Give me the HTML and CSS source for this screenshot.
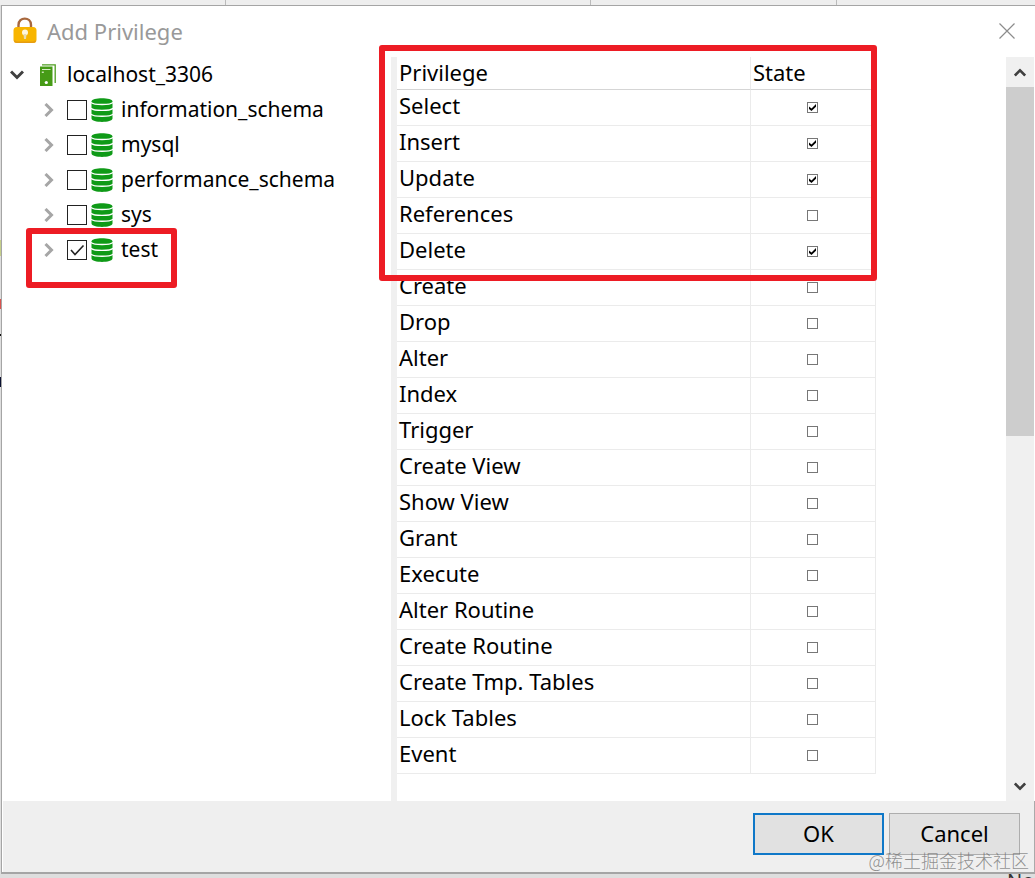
FILE: index.html
```html
<!DOCTYPE html>
<html lang="en">
<head>
    <meta charset="UTF-8">
    <meta name="viewport" content="width=device-width, initial-scale=1.0">
    <title>Add Privilege</title>
    <link rel="stylesheet" href="styles.css">
</head>
<body>
    <svg class="defs" width="0" height="0" aria-hidden="true">
        <symbol id="icon-db" viewBox="0 0 22 24">
            <path fill="#0f9a17" d="M0.500 3.500C0.500 -0.700 21.500 -0.700 21.500 3.500V20.500C21.500 25 0.500 25 0.500 20.500Z"/>
            <path fill="none" stroke="#fff" stroke-width="1.300" d="M0 4.300C2 7.200 20 7.200 22 4.300M0 10.200C2 13.200 20 13.200 22 10.200M0 16C2 19 20 19 22 16"/>
        </symbol>
        <symbol id="icon-right" viewBox="0 0 10 14">
            <path fill="none" stroke="#a6a6a6" stroke-width="3" d="M1.500 1L7.500 7L1.500 13"/>
        </symbol>
        <symbol id="icon-down" viewBox="0 0 14 10">
            <path fill="none" stroke="#404040" stroke-width="3" d="M1 1.500L7 7.500L13 1.500"/>
        </symbol>
    </svg>

    <div class="dialog">
        <header class="titlebar">
            <svg class="lock" viewBox="0 0 24 27" aria-hidden="true">
                <path fill="none" stroke="#a8683e" stroke-width="2.400" d="M5.500 12V8C5.500 -0.500 18 -0.500 18 8V12"/>
                <rect x="0.500" y="10" width="23" height="16" rx="3.500" fill="#f8b500"/>
                <path fill="none" stroke="#e59c12" stroke-width="1.500" d="M1.500 23.500Q2 25.300 4 25.300H20Q22 25.300 22.500 23.500"/>
                <circle cx="12" cy="15.500" r="3" fill="#fff6dc"/>
                <path fill="#e8dcb0" d="M10.500 17h3l-0.500 5h-2z"/>
            </svg>
            <h1>Add Privilege</h1>
            <button class="close" type="button" aria-label="Close">
                <svg width="16" height="16" viewBox="0 0 16 16"><path stroke="#8c8c8c" stroke-width="1.200" d="M0.500 0.500L15.500 15.500M15.500 0.500L0.500 15.500"/></svg>
            </button>
        </header>

        <main class="content">
            <nav class="tree" aria-label="Databases">
                <div class="root">
                    <svg class="arrow-down" width="14" height="10"><use href="#icon-down"/></svg>
                    <svg class="server" width="16" height="22" viewBox="0 0 16 22">
                        <path fill="none" stroke="#4d9d1f" stroke-width="1.300" d="M2 0.800H15.200V19"/>
                        <rect x="0" y="2.500" width="12.500" height="19.500" fill="#469b16"/>
                        <path stroke="#d8ebcb" stroke-width="1" d="M2 5.500H10.500"/>
                        <rect x="1.800" y="7.600" width="2" height="1.300" fill="#d8ebcb"/>
                        <circle cx="6.300" cy="18.500" r="1.600" fill="#fff"/>
                    </svg>
                    <span>localhost_3306</span>
                </div>
                <ul>
                    <li>
                        <svg class="arrow" width="10" height="14"><use href="#icon-right"/></svg>
                        <input type="checkbox" id="db-information">
                        <svg class="db" width="22" height="24"><use href="#icon-db"/></svg>
                        <label for="db-information">information_schema</label>
                    </li>
                    <li>
                        <svg class="arrow" width="10" height="14"><use href="#icon-right"/></svg>
                        <input type="checkbox" id="db-mysql">
                        <svg class="db" width="22" height="24"><use href="#icon-db"/></svg>
                        <label for="db-mysql">mysql</label>
                    </li>
                    <li>
                        <svg class="arrow" width="10" height="14"><use href="#icon-right"/></svg>
                        <input type="checkbox" id="db-performance">
                        <svg class="db" width="22" height="24"><use href="#icon-db"/></svg>
                        <label for="db-performance">performance_schema</label>
                    </li>
                    <li>
                        <svg class="arrow" width="10" height="14"><use href="#icon-right"/></svg>
                        <input type="checkbox" id="db-sys">
                        <svg class="db" width="22" height="24"><use href="#icon-db"/></svg>
                        <label for="db-sys">sys</label>
                    </li>
                    <li>
                        <svg class="arrow" width="10" height="14"><use href="#icon-right"/></svg>
                        <input type="checkbox" id="db-test" checked>
                        <svg class="db" width="22" height="24"><use href="#icon-db"/></svg>
                        <label for="db-test">test</label>
                        <div class="highlight highlight-db"></div>
                    </li>
                </ul>
            </nav>

            <section class="privileges">
                <div class="grid-wrap">
                    <table>
                        <thead>
                            <tr><th>Privilege</th><th>State</th></tr>
                        </thead>
                        <tbody>
                            <tr><td><label for="p1">Select</label></td><td><input type="checkbox" id="p1" checked></td></tr>
                            <tr><td><label for="p2">Insert</label></td><td><input type="checkbox" id="p2" checked></td></tr>
                            <tr><td><label for="p3">Update</label></td><td><input type="checkbox" id="p3" checked></td></tr>
                            <tr><td><label for="p4">References</label></td><td><input type="checkbox" id="p4"></td></tr>
                            <tr><td><label for="p5">Delete</label></td><td><input type="checkbox" id="p5" checked></td></tr>
                            <tr><td><label for="p6">Create</label></td><td><input type="checkbox" id="p6"></td></tr>
                            <tr><td><label for="p7">Drop</label></td><td><input type="checkbox" id="p7"></td></tr>
                            <tr><td><label for="p8">Alter</label></td><td><input type="checkbox" id="p8"></td></tr>
                            <tr><td><label for="p9">Index</label></td><td><input type="checkbox" id="p9"></td></tr>
                            <tr><td><label for="p10">Trigger</label></td><td><input type="checkbox" id="p10"></td></tr>
                            <tr><td><label for="p11">Create View</label></td><td><input type="checkbox" id="p11"></td></tr>
                            <tr><td><label for="p12">Show View</label></td><td><input type="checkbox" id="p12"></td></tr>
                            <tr><td><label for="p13">Grant</label></td><td><input type="checkbox" id="p13"></td></tr>
                            <tr><td><label for="p14">Execute</label></td><td><input type="checkbox" id="p14"></td></tr>
                            <tr><td><label for="p15">Alter Routine</label></td><td><input type="checkbox" id="p15"></td></tr>
                            <tr><td><label for="p16">Create Routine</label></td><td><input type="checkbox" id="p16"></td></tr>
                            <tr><td><label for="p17">Create Tmp. Tables</label></td><td><input type="checkbox" id="p17"></td></tr>
                            <tr><td><label for="p18">Lock Tables</label></td><td><input type="checkbox" id="p18"></td></tr>
                            <tr><td><label for="p19">Event</label></td><td><input type="checkbox" id="p19"></td></tr>
                        </tbody>
                    </table>
                    <div class="highlight highlight-grid"></div>
                </div>
            </section>

            <div class="scrollbar">
                <button type="button" aria-label="Scroll up"><svg class="up" width="12" height="9" viewBox="0 0 14 10"><use href="#icon-down"/></svg></button>
                <div class="track"><div class="thumb"></div></div>
                <button type="button" aria-label="Scroll down"><svg width="12" height="9" viewBox="0 0 14 10"><use href="#icon-down"/></svg></button>
            </div>
        </main>

        <footer class="actions">
            <button class="btn btn-default" type="button">OK</button>
            <button class="btn" type="button">Cancel</button>
        </footer>
    </div>

    <div class="behind">No</div>
    <div class="watermark">@稀土掘金技术社区</div>
</body>
</html>
```
FILE: styles.css
```css
* {
    box-sizing: border-box;
}
body {
    margin: 0;
    padding: 5px 0 4px 1px;
    min-height: 100vh;
    display: flex;
    flex-direction: column;
    position: relative;
    overflow: hidden;
    font-family: "Noto Sans", "Noto Sans CJK SC", sans-serif;
    font-size: 22px;
    line-height: 30px;
    color: #000;
    /* slivers of the window behind the dialog */
    background:
        linear-gradient(#bbb, #bbb) 225px 0 / 1px 5px no-repeat,
        linear-gradient(#bbb, #bbb) 590px 0 / 1px 5px no-repeat,
        linear-gradient(#bbb, #bbb) 836px 0 / 1px 5px no-repeat,
        linear-gradient(#c5cf8a, #c5cf8a) 0 240px / 2px 16px no-repeat,
        linear-gradient(#d9534f, #d9534f) 0 299px / 2px 10px no-repeat,
        linear-gradient(#111, #111) 0 334px / 2px 2px no-repeat,
        linear-gradient(#0a1030, #0a1030) 0 377px / 2px 10px no-repeat,
        linear-gradient(#eee, #eee) 0 0 / 100% 5px no-repeat,
        #dedede;
}
.defs {
    position: absolute;
}
.dialog {
    flex: 1;
    display: flex;
    flex-direction: column;
    background: #fff;
    border: 1px solid #a5a5a5;
    border-width: 1px 0 2px 1px;
}

/* title bar */
.titlebar {
    height: 51px;
    flex: none;
    display: flex;
    align-items: center;
    padding: 0 20px 2px 11px;
}
.lock {
    width: 24px;
    height: 27px;
    margin-right: 10px;
}
h1 {
    margin: 0;
    flex: 1;
    font-size: 22px;
    font-weight: normal;
    color: #999;
}
.close {
    display: flex;
    padding: 0;
    border: none;
    background: none;
}

.content {
    flex: 1;
    display: flex;
}

/* database tree */
.tree {
    flex: 0 0 389px;
    font-size: 21px;
}
.tree ul {
    list-style: none;
    margin: 0;
    padding: 0;
}
.root,
.tree li {
    display: flex;
    align-items: center;
    height: 35px;
}
.root {
    padding-left: 8px;
}
.tree li {
    position: relative;
    padding-left: 42px;
}
.tree label,
.root span {
    padding-bottom: 2px;
}
.server {
    margin: 0 11px 0 16px;
}
.arrow {
    margin-right: 13px;
}
.db {
    margin: 0 8px 0 4px;
}
input[type="checkbox"] {
    appearance: none;
    margin: 0;
    background: #fff center / contain no-repeat;
}
.tree input {
    width: 20px;
    height: 20px;
    border: 1px solid #222;
}
.tree input:checked {
    background-image: url("data:image/svg+xml,%3Csvg xmlns='http://www.w3.org/2000/svg' viewBox='0 0 18 18'%3E%3Cpath fill='none' stroke='%23222' stroke-width='1.600' d='M3 9L7 13.500L15.500 4.500'/%3E%3C/svg%3E");
}

/* privilege grid */
.privileges {
    flex: 1;
    border-left: 6px solid #f0f0f0;
    padding-bottom: 27px;
}
.grid-wrap {
    position: relative;
    width: 479px;
}
table {
    width: 100%;
    table-layout: fixed;
    border-collapse: separate;
    border-spacing: 0;
}
th,
td {
    height: 36px;
    padding: 0 2px;
    border-right: 1px solid #ebebeb;
    border-bottom: 1px solid #ebebeb;
    text-align: left;
    font-weight: normal;
}
th {
    height: 33px;
    padding-bottom: 2px;
    border-bottom-color: #d5d5d5;
}
th:first-child {
    width: 354px;
}
td:first-child {
    padding-bottom: 5px;
}
td:last-child {
    padding-right: 4px;
    text-align: center;
    line-height: 0;
}
td label {
    display: block;
}
td input {
    width: 11px;
    height: 11px;
    border: 1px solid #777;
}
td input:checked {
    background-image: url("data:image/svg+xml,%3Csvg xmlns='http://www.w3.org/2000/svg' viewBox='0 0 9 9'%3E%3Cpath fill='%23000' d='M1 3.500L3.500 5.500L8 1V3.800L3.500 8L1 6Z'/%3E%3C/svg%3E");
}

/* red marker boxes */
.highlight {
    position: absolute;
    border: 6px solid #ed1c24;
    border-radius: 3px;
    pointer-events: none;
}
.highlight-db {
    left: 24px;
    top: -4px;
    width: 151px;
    height: 60px;
}
.highlight-grid {
    left: -18px;
    top: -12px;
    width: 498px;
    height: 236px;
}

.scrollbar {
    flex: 0 0 29px;
    display: flex;
    flex-direction: column;
    background: #f0f0f0;
    border-right: 1px solid #fff;
}
.scrollbar button {
    height: 30px;
    padding: 0;
    border: none;
    background: none;
    display: flex;
    align-items: center;
    justify-content: center;
}
.up {
    transform: rotate(180deg);
}
.track {
    flex: 1;
}
.thumb {
    height: 51%;
    background: #cdcdcd;
}

/* buttons */
.actions {
    flex: none;
    display: flex;
    justify-content: flex-end;
    gap: 5px;
    padding: 12px 14px 17px;
    margin-left: 1px;
    background: #efefef;
    border-right: 1px solid #aaa;
}
.btn {
    width: 131px;
    height: 42px;
    padding: 0 0 2px;
    border: 1px solid #adadad;
    background: #e1e1e1;
    font: inherit;
    color: #000;
}
.btn-default {
    border: 2px solid #0f78c8;
}

.behind {
    position: absolute;
    left: 1007px;
    top: 872px;
    height: 6px;
    overflow: hidden;
    font-size: 20px;
    line-height: 18px;
    color: #333;
}
.watermark {
    position: absolute;
    right: 6px;
    bottom: 5px;
    font-family: "Noto Sans CJK SC", sans-serif;
    font-size: 18px;
    font-weight: 300;
    line-height: 26px;
    color: rgba(110, 110, 110, 0.75);
}
```
